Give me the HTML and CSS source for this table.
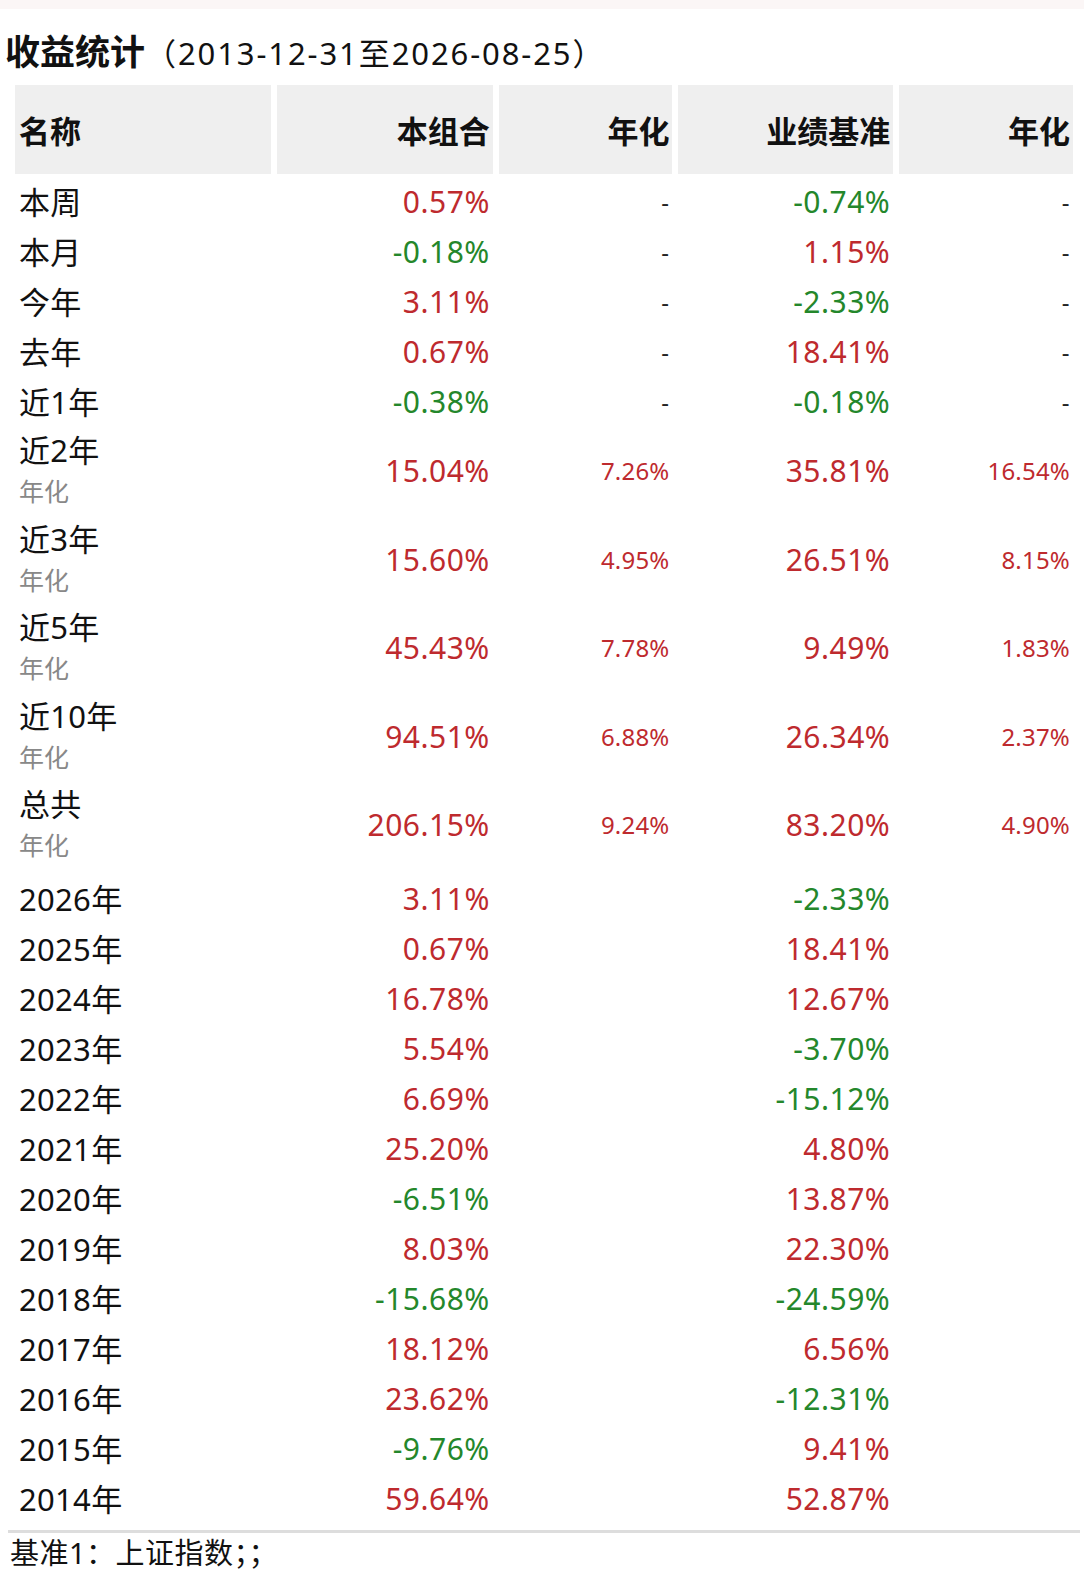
FILE: index.html
```html
<!DOCTYPE html>
<html lang="zh-CN">
<head>
<meta charset="utf-8">
<link rel="stylesheet" href="styles.css">
</head>
<body>
<div class="topbar"></div>
<h1 class="title"><span class="title-main">收益统计</span><span class="title-range">（2013-12-31至2026-08-25）</span></h1>
<table class="stats">
  <colgroup>
    <col class="c1"><col class="c2"><col class="c3"><col class="c4"><col class="c5">
  </colgroup>
  <thead>
    <tr><th class="name">名称</th><th>本组合</th><th>年化</th><th>业绩基准</th><th>年化</th></tr>
  </thead>
  <tbody>
    <tr class="r1"><td class="name">本周</td><td class="up">0.57%</td><td class="dash">-</td><td class="down">-0.74%</td><td class="dash">-</td></tr>
    <tr class="r1"><td class="name">本月</td><td class="down">-0.18%</td><td class="dash">-</td><td class="up">1.15%</td><td class="dash">-</td></tr>
    <tr class="r1"><td class="name">今年</td><td class="up">3.11%</td><td class="dash">-</td><td class="down">-2.33%</td><td class="dash">-</td></tr>
    <tr class="r1"><td class="name">去年</td><td class="up">0.67%</td><td class="dash">-</td><td class="up">18.41%</td><td class="dash">-</td></tr>
    <tr class="r1"><td class="name">近1年</td><td class="down">-0.38%</td><td class="dash">-</td><td class="down">-0.18%</td><td class="dash">-</td></tr>
    <tr class="r2"><td class="name"><div class="lbl">近2年</div><div class="sub">年化</div></td><td class="up">15.04%</td><td class="up small">7.26%</td><td class="up">35.81%</td><td class="up small">16.54%</td></tr>
    <tr class="r2"><td class="name"><div class="lbl">近3年</div><div class="sub">年化</div></td><td class="up">15.60%</td><td class="up small">4.95%</td><td class="up">26.51%</td><td class="up small">8.15%</td></tr>
    <tr class="r2"><td class="name"><div class="lbl">近5年</div><div class="sub">年化</div></td><td class="up">45.43%</td><td class="up small">7.78%</td><td class="up">9.49%</td><td class="up small">1.83%</td></tr>
    <tr class="r2"><td class="name"><div class="lbl">近10年</div><div class="sub">年化</div></td><td class="up">94.51%</td><td class="up small">6.88%</td><td class="up">26.34%</td><td class="up small">2.37%</td></tr>
    <tr class="r2"><td class="name"><div class="lbl">总共</div><div class="sub">年化</div></td><td class="up">206.15%</td><td class="up small">9.24%</td><td class="up">83.20%</td><td class="up small">4.90%</td></tr>
    <tr class="r1"><td class="name">2026年</td><td class="up">3.11%</td><td></td><td class="down">-2.33%</td><td></td></tr>
    <tr class="r1"><td class="name">2025年</td><td class="up">0.67%</td><td></td><td class="up">18.41%</td><td></td></tr>
    <tr class="r1"><td class="name">2024年</td><td class="up">16.78%</td><td></td><td class="up">12.67%</td><td></td></tr>
    <tr class="r1"><td class="name">2023年</td><td class="up">5.54%</td><td></td><td class="down">-3.70%</td><td></td></tr>
    <tr class="r1"><td class="name">2022年</td><td class="up">6.69%</td><td></td><td class="down">-15.12%</td><td></td></tr>
    <tr class="r1"><td class="name">2021年</td><td class="up">25.20%</td><td></td><td class="up">4.80%</td><td></td></tr>
    <tr class="r1"><td class="name">2020年</td><td class="down">-6.51%</td><td></td><td class="up">13.87%</td><td></td></tr>
    <tr class="r1"><td class="name">2019年</td><td class="up">8.03%</td><td></td><td class="up">22.30%</td><td></td></tr>
    <tr class="r1"><td class="name">2018年</td><td class="down">-15.68%</td><td></td><td class="down">-24.59%</td><td></td></tr>
    <tr class="r1"><td class="name">2017年</td><td class="up">18.12%</td><td></td><td class="up">6.56%</td><td></td></tr>
    <tr class="r1"><td class="name">2016年</td><td class="up">23.62%</td><td></td><td class="down">-12.31%</td><td></td></tr>
    <tr class="r1"><td class="name">2015年</td><td class="down">-9.76%</td><td></td><td class="up">9.41%</td><td></td></tr>
    <tr class="r1"><td class="name">2014年</td><td class="up">59.64%</td><td></td><td class="up">52.87%</td><td></td></tr>
  </tbody>
</table>
<div class="rule"></div>
<p class="note">基准1：上证指数；；</p>
</body>
</html>
```

FILE: styles.css
```css
html, body {
  margin: 0;
  padding: 0;
  background: #ffffff;
}
body {
  font-family: "Noto Sans", "Noto Sans CJK SC", sans-serif;
  color: #111;
  width: 1084px;
  height: 1573px;
  overflow: hidden;
}
.topbar {
  height: 9px;
  background: #fbf6f6;
}
.title {
  margin: 0;
  padding: 0 0 0 5px;
  height: 76px;
  line-height: 82px;
  font-weight: normal;
  white-space: nowrap;
}
.title-main {
  font-family: "Noto Sans CJK SC", sans-serif;
  font-size: 35px;
  font-weight: 700;
}
.title-range {
  font-size: 31px;
  font-weight: 400;
  letter-spacing: 1.9px;
}
.stats {
  margin-left: 9px;
  border-collapse: separate;
  border-spacing: 6.5px 0;
  table-layout: fixed;
  width: 1070px;
}
.c1 { width: 255px; }
.c2 { width: 215px; }
.c3 { width: 173px; }
.c4 { width: 214px; }
.c5 { width: 173px; }
.stats th {
  font-family: "Noto Sans CJK SC", sans-serif;
  background: #efefef;
  height: 89px;
  padding: 0 3px 0 0;
  font-size: 31px;
  font-weight: 700;
  text-align: right;
  color: #111;
}
.stats th.name {
  text-align: left;
  padding-left: 4px;
}
.stats td {
  padding: 0 3px 0 0;
  font-size: 30px;
  letter-spacing: 0.5px;
  text-align: right;
  vertical-align: middle;
  white-space: nowrap;
}
.stats td.name {
  text-align: left;
  padding-left: 4px;
  font-size: 31px;
  letter-spacing: 0.3px;
  color: #111;
}
.stats tbody tr:first-child td {
  padding-top: 3px;
}
.r1 td {
  height: 50px;
  line-height: 50px;
}
.r2 td {
  height: 88.5px;
  line-height: 1;
}
.r2 td.name {
  vertical-align: top;
}
.lbl {
  font-size: 31px;
  line-height: 46px;
}
.sub {
  font-family: "Noto Sans CJK SC", sans-serif;
  font-size: 25px;
  line-height: 34px;
  color: #888;
  letter-spacing: 0;
}
.up { color: #be2a2e; }
.down { color: #24872b; }
.stats td.small {
  font-size: 24px;
  letter-spacing: 0.2px;
}
.stats td.dash {
  font-size: 24px;
  color: #222;
}
.stats .r2 + .r1 td {
  padding-top: 4px;
  height: 50px;
  line-height: 50px;
}
.rule {
  margin: 6px 4px 0 8px;
  height: 3px;
  background: #dddddd;
}
.note {
  margin: 3px 0 0 10px;
  font-size: 29px;
  line-height: 34px;
  letter-spacing: 0.5px;
  color: #111;
}
```
